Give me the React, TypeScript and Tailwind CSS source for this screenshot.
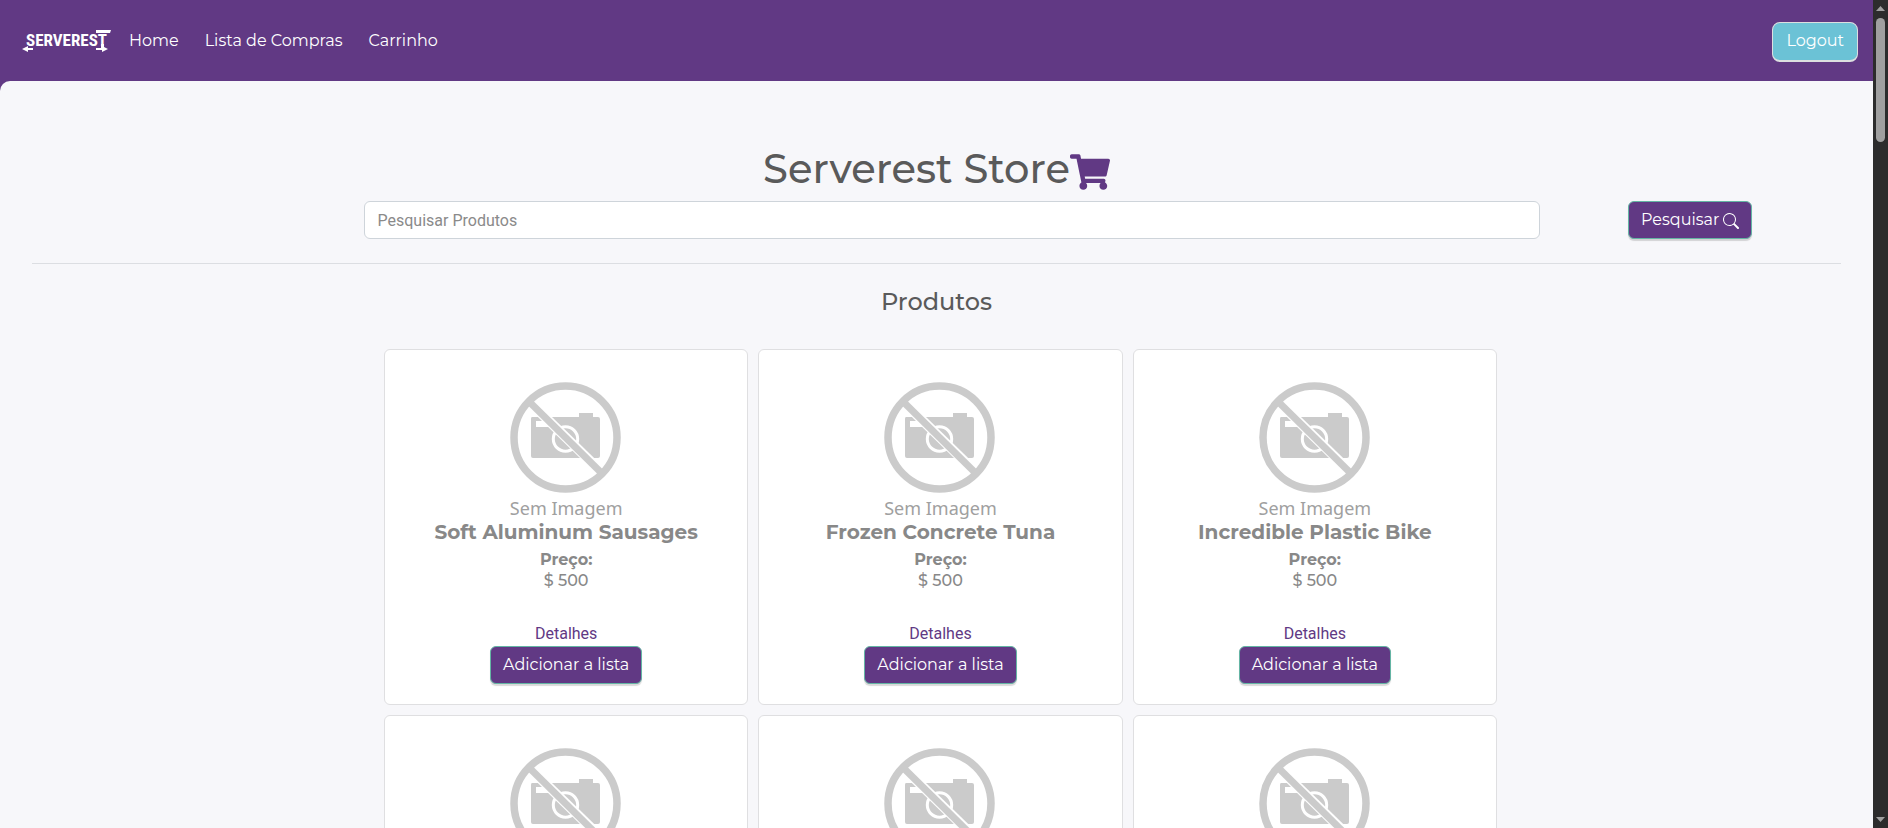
import React from "react";
import { FaShoppingCart } from "react-icons/fa";
import { BsSearch } from "react-icons/bs";

const products = [
  { name: "Soft Aluminum Sausages", price: 500 },
  { name: "Frozen Concrete Tuna", price: 500 },
  { name: "Incredible Plastic Bike", price: 500 },
];

const rows = [0, 1];

const primaryButton =
  "inline-flex h-[38px] items-center justify-center gap-1 rounded-md border border-[#64b5a4] bg-[#613984] px-3 pb-px text-base leading-6 text-white shadow-[0_2px_1px_rgba(0,0,0,0.15)]";

function Logo() {
  return (
    <svg
      className="block overflow-visible"
      width="90"
      height="26"
      viewBox="0 0 90 26"
      fill="white"
      role="img"
      aria-label="Serverest"
      fontFamily="'Roboto Condensed', 'Liberation Sans Narrow', sans-serif"
      fontWeight="700"
    >
      <text x="4" y="18" fontSize="17">
        SERVEREST
      </text>
      <path d="M74 2h15l-1 3H74zM79 16h3v5h-3z" />
      <path d="M0 21l6-3v2h5v2H6v2zM86 21l-6-3v2h-6v2h6v2z" />
    </svg>
  );
}

function NoImage() {
  return (
    <figure className="flex flex-col items-center">
      <svg width="112" height="112" viewBox="0 0 112 112" aria-hidden="true">
        <path
          fill="#cbcbcb"
          d="M22 35h47v-4h14v4h5q2 0 2 2v37q0 2-2 2H23q-2 0-2-2V37q0-2 1-2z"
        />
        <path fill="#fff" d="M26 39h14v6H26z" />
        <circle cx="55.500" cy="57" r="12.2" fill="none" stroke="#fff" strokeWidth="3" />
        <path d="M19.500 20l73 71" stroke="#fff" strokeWidth="10" />
        <circle cx="55.500" cy="55.500" r="51.5" fill="none" stroke="#cbcbcb" strokeWidth="7.500" />
        <path d="M19.500 20l72 71" stroke="#cbcbcb" strokeWidth="7" />
      </svg>
      <figcaption className="font-['Noto_Sans',sans-serif] text-lg leading-7 text-[#a0a0a0]">
        Sem Imagem
      </figcaption>
    </figure>
  );
}

function ProductCard({ name, price }: { name: string; price: number }) {
  return (
    <article className="flex h-[356px] flex-col items-center rounded-md border border-[#dfdfe1] bg-white pt-8 text-[#888]">
      <NoImage />
      <h5 className="text-xl leading-5 font-bold">{name}</h5>
      <h6 className="mt-[7px] text-base leading-[22px] font-bold">Preço:</h6>
      <p className="text-base leading-5 font-medium">$ {price}</p>
      <a href="#detalhes" className="mt-[31px] font-[Roboto,sans-serif] text-base leading-6 text-[#613984]">
        Detalhes
      </a>
      <button type="button" className={primaryButton}>
        Adicionar a lista
      </button>
    </article>
  );
}

export default function App() {
  return (
    <div className="flex h-screen bg-[#613984] font-[Montserrat,Inter,sans-serif]">
      <div className="h-full min-w-0 flex-1 overflow-y-auto [scrollbar-width:none]">
        <nav className="flex h-[81px] items-center pr-[15px] pl-[22px] text-base leading-6 text-white">
          <a href="#home">
            <Logo />
          </a>
          <ul className="ml-[17px] flex flex-1 gap-[26px]">
            <li><a href="#home">Home</a></li>
            <li><a href="#lista">Lista de Compras</a></li>
            <li><a href="#carrinho">Carrinho</a></li>
          </ul>
          <button
            type="button"
            className="mt-[3px] h-10 rounded-lg border border-b-2 border-[#dcdfe0] bg-[#6bc2d6] px-[13px] pb-[2px] text-base leading-6"
          >
            Logout
          </button>
        </nav>

        <main className="rounded-tl-[10px] bg-[#f7f7fa] px-8 pt-16 pb-8">
          <h1 className="flex items-center justify-center text-[40px] leading-[48px] font-medium text-[#5a5a5a]">
            Serverest Store
            <FaShoppingCart className="mt-[6px] text-[#613984]" />
          </h1>
          <form className="mt-2 grid grid-cols-12" onSubmit={(e) => e.preventDefault()}>
            <div className="col-span-8 col-start-3 pl-[30px]">
              <input
                type="text"
                aria-label="Pesquisar Produtos"
                placeholder="Pesquisar Produtos"
                className="block h-[38px] w-full rounded-md border border-[#ced4da] bg-white px-[13px] font-[Roboto,sans-serif] text-base text-[#5a5a5a] placeholder:text-[#8a8a8a]"
              />
            </div>
            <div className="col-span-2 text-center">
              <button type="submit" className={primaryButton}>
                Pesquisar
                <BsSearch className="mt-[3px] size-4" />
              </button>
            </div>
          </form>
          <hr className="mt-6 border-[#dcdee2]" />
          <h4 className="mt-6 text-center text-2xl leading-7 font-medium text-[#5a5a5a]">Produtos</h4>
          <div className="mt-[33px] pl-2">
            <section className="mx-auto grid max-w-[1113px] grid-cols-3 gap-[10px]">
              {rows.map((row) =>
                products.map((p) => <ProductCard key={`${row}-${p.name}`} name={row === 0 ? p.name : ""} price={p.price} />)
              )}
            </section>
          </div>
        </main>
      </div>

      <aside aria-hidden="true" className="flex w-[15px] flex-col items-center bg-[#2c2c2c] py-[6px]">
        <svg width="9" height="5" viewBox="0 0 9 5" fill="#a0a0a0"><path d="M4.500 0L9 5H0z" /></svg>
        <div className="mt-[7px] h-[124px] w-[9px] rounded-full bg-[#a0a0a0]" />
        <svg className="mt-auto" width="9" height="5" viewBox="0 0 9 5" fill="#a0a0a0"><path d="M0 0H9L4.500 5z" /></svg>
      </aside>
    </div>
  );
}
